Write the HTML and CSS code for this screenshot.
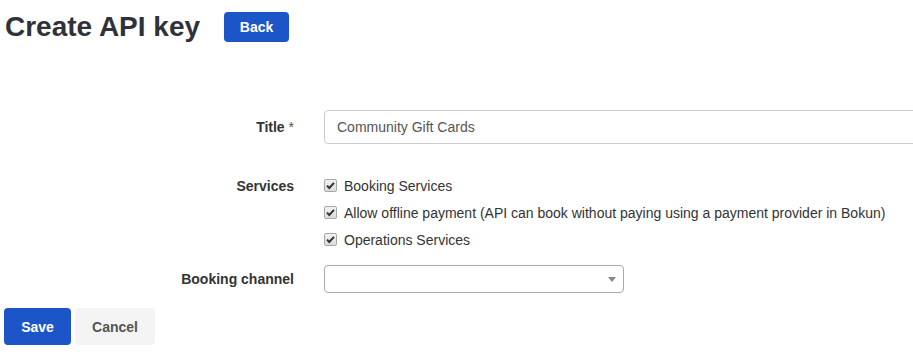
FILE: index.html
```html
<!DOCTYPE html>
<html lang="en">
<head>
    <meta charset="UTF-8">
    <meta name="viewport" content="width=device-width, initial-scale=1.0">
    <title>Create API key</title>
    <link rel="stylesheet" href="styles.css">
</head>
<body>
    <header class="page-header">
        <h1 class="page-title">Create API key</h1>
        <a href="#" class="btn btn-primary btn-back">Back</a>
    </header>

    <form class="key-form">
        <div class="form-row row-title">
            <label class="form-label" for="title">Title <span class="required">*</span></label>
            <input class="form-input" id="title" type="text" value="Community Gift Cards">
        </div>

        <div class="form-row row-services">
            <span class="form-label">Services</span>
            <div class="check-list">
                <label class="check-item">
                    <span class="check-box"><svg viewBox="0 0 13 13" width="13" height="13"><path d="M3 6.6 L5.3 9 L10 3.8" fill="none" stroke="#333" stroke-width="2"/></svg></span>
                    Booking Services
                </label>
                <label class="check-item">
                    <span class="check-box"><svg viewBox="0 0 13 13" width="13" height="13"><path d="M3 6.6 L5.3 9 L10 3.8" fill="none" stroke="#333" stroke-width="2"/></svg></span>
                    Allow offline payment (API can book without paying using a payment provider in Bokun)
                </label>
                <label class="check-item">
                    <span class="check-box"><svg viewBox="0 0 13 13" width="13" height="13"><path d="M3 6.6 L5.3 9 L10 3.8" fill="none" stroke="#333" stroke-width="2"/></svg></span>
                    Operations Services
                </label>
            </div>
        </div>

        <div class="form-row row-channel">
            <span class="form-label">Booking channel</span>
            <div class="select-box">
                <span class="select-arrow"></span>
            </div>
        </div>

        <div class="form-actions">
            <button type="button" class="btn btn-primary btn-save">Save</button>
            <button type="button" class="btn btn-cancel">Cancel</button>
        </div>
    </form>
</body>
</html>
```

FILE: styles.css
```css
* {
    margin: 0;
    padding: 0;
    box-sizing: border-box;
}

html, body {
    overflow: hidden;
}

body {
    font-family: "Liberation Sans", Arial, sans-serif;
    font-size: 14px;
    color: #333;
    background: #fff;
    padding: 12px 0 0 4px;
}

.page-header {
    display: flex;
    align-items: center;
    gap: 24px;
    height: 30px;
}

.page-title {
    font-size: 28px;
    font-weight: bold;
    color: #2f3238;
    line-height: 30px;
    padding-left: 1px;
}

.btn {
    display: inline-flex;
    align-items: center;
    justify-content: center;
    border: none;
    border-radius: 4px;
    font-family: inherit;
    font-size: 14px;
    font-weight: bold;
    text-decoration: none;
    cursor: pointer;
}

.btn-primary {
    background: #1c55c7;
    color: #fff;
}

.btn-back {
    width: 65px;
    height: 30px;
}

.key-form {
    margin-top: 68px;
}

.form-row {
    display: grid;
    grid-template-columns: 290px 1fr;
    column-gap: 30px;
}

.form-label {
    font-weight: bold;
    text-align: right;
    color: #333;
}

.required {
    font-weight: normal;
    color: #555;
}

.row-title {
    align-items: center;
    margin-bottom: 28px;
}

.form-input {
    width: 620px;
    height: 34px;
    border: 1px solid #ccc;
    border-radius: 4px;
    padding: 0 12px;
    font-family: inherit;
    font-size: 14px;
    color: #555;
}

.row-services .form-label {
    line-height: 28px;
}

.check-item {
    display: flex;
    align-items: center;
    gap: 7px;
    height: 27px;
    white-space: nowrap;
}

.check-box {
    display: block;
    width: 13px;
    height: 13px;
    border: 1px solid #a8a8a8;
    border-radius: 2px;
    background: linear-gradient(#f2f2f2, #dcdcdc);
    overflow: hidden;
}

.check-box svg {
    display: block;
    margin: -1px 0 0 -1px;
}

.row-channel {
    align-items: center;
    margin-top: 12px;
}

.select-box {
    position: relative;
    width: 300px;
    height: 28px;
    border: 1px solid #aaa;
    border-radius: 4px;
    background: #fff;
}

.select-arrow {
    position: absolute;
    right: 7px;
    top: 11px;
    border-left: 4px solid transparent;
    border-right: 4px solid transparent;
    border-top: 5px solid #888;
}

.form-actions {
    display: flex;
    gap: 4px;
    margin-top: 15px;
}

.btn-save {
    width: 67px;
    height: 37px;
}

.btn-cancel {
    width: 80px;
    height: 37px;
    background: #f4f4f4;
    color: #555;
}
```
